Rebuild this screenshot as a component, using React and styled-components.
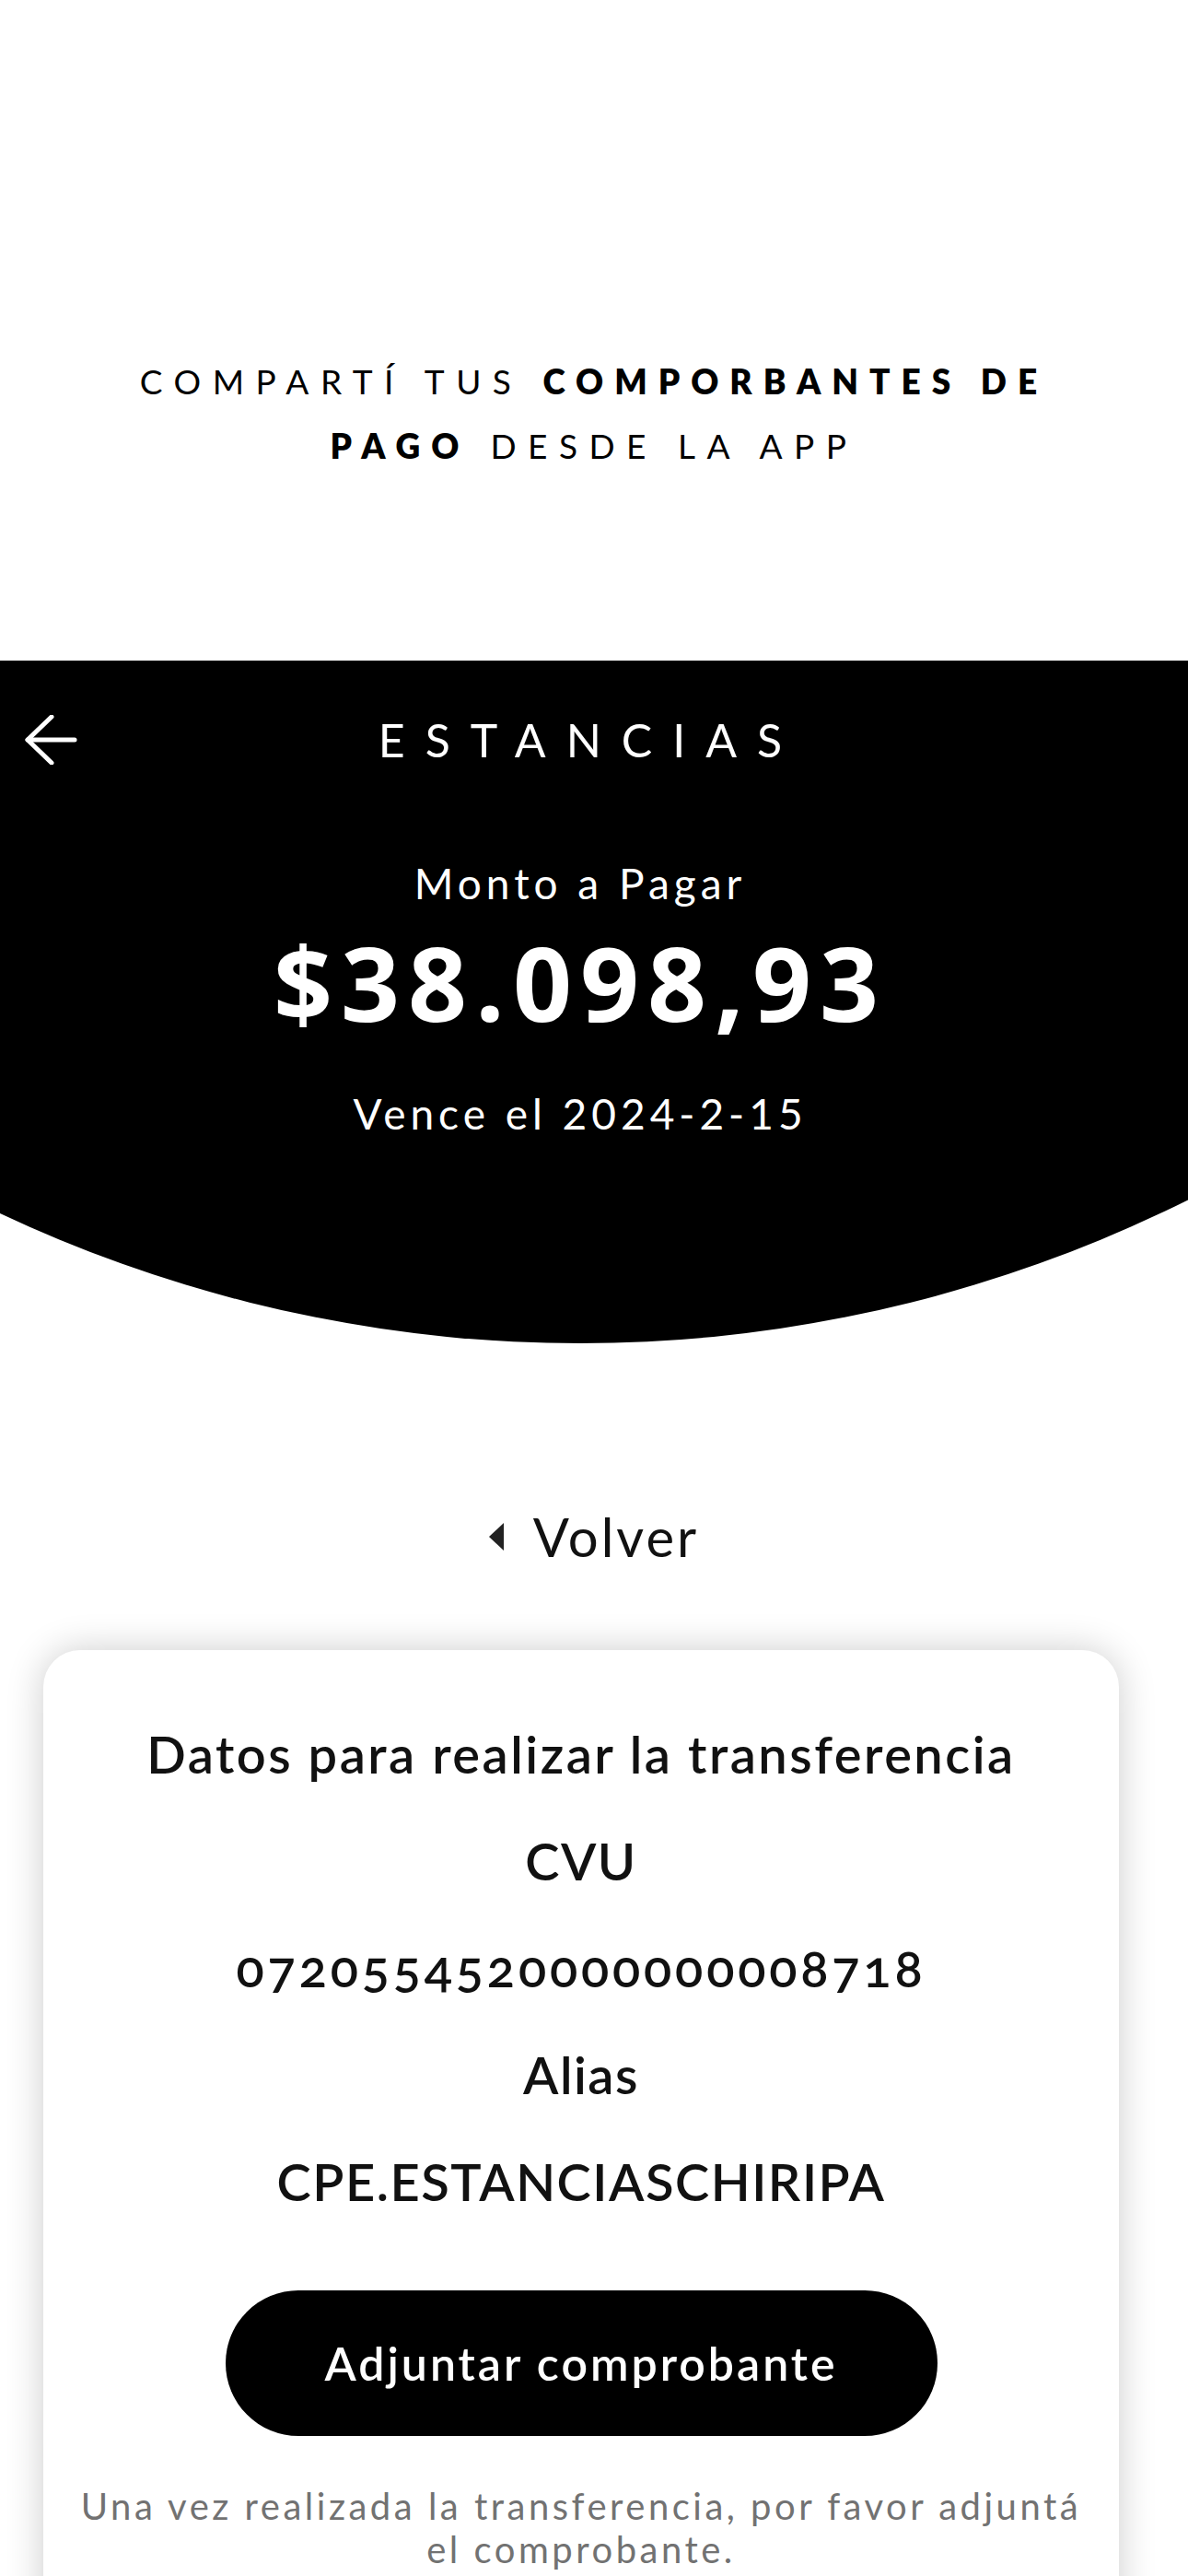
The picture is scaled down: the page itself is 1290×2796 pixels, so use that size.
import React from 'react';
import styled, { createGlobalStyle } from 'styled-components';

const GlobalStyle = createGlobalStyle`
  html, body {
    margin: 0;
    padding: 0;
    background: #ffffff;
  }
  html::-webkit-scrollbar { display: none; }
  html { scrollbar-width: none; }
  body {
    font-family: Lato, "Open Sans", sans-serif;
    color: #111;
    -webkit-font-smoothing: antialiased;
  }
`;

const Page = styled.div`
  height: 100vh;
  overflow: hidden;
  display: flex;
  flex-direction: column;

  & > * {
    flex-shrink: 0;
  }
`;

// Promo heading above the phone screen
const Promo = styled.section`
  height: 717px;
  box-sizing: border-box;
  padding-top: 379px;
  display: flex;
  justify-content: center;
`;

const PromoText = styled.p`
  margin: 0;
  text-align: center;
  font-family: Lato, sans-serif;
  font-weight: 400;
  font-size: 37px;
  line-height: 70px;
  letter-spacing: 12.5px;
  text-transform: uppercase;
  color: #000;
`;

const Strong = styled.span`
  font-weight: 800;
  letter-spacing: 12px;
`;

// Black header with curved bottom
const Header = styled.header`
  height: 741px;
  background: #000;
  color: #fff;
  clip-path: circle(1478px at 630px -737px);
  box-sizing: border-box;
  padding-right: 30px;
  display: flex;
  flex-direction: column;
  align-items: center;
`;

const TopBar = styled.div`
  width: 100%;
  height: 60px;
  margin-top: 56px;
  display: grid;
  grid-template-columns: 1fr auto 1fr;
  align-items: center;
`;

const BackButton = styled.button`
  justify-self: start;
  margin-left: 26px;
  padding: 0;
  border: none;
  background: none;
  display: flex;
  cursor: pointer;
`;

const Brand = styled.h1`
  margin: 0 -22px 0 0;
  font-family: Lato, sans-serif;
  font-weight: 400;
  font-size: 50px;
  line-height: 60px;
  letter-spacing: 22px;
`;

const Label = styled.div`
  margin-top: ${(p) => p.$top}px;
  font-family: Lato, sans-serif;
  font-size: ${(p) => p.$size}px;
  line-height: 1.2;
  letter-spacing: 5px;
  font-weight: 400;
`;

const Amount = styled.div`
  margin-top: 24px;
  font-family: "Open Sans", sans-serif;
  font-weight: 700;
  font-size: 112px;
  line-height: 112px;
  letter-spacing: 9px;
`;

// Volver link
const BackLink = styled.a`
  margin-top: 175px;
  align-self: center;
  display: flex;
  align-items: center;
  gap: 32px;
  font-family: Lato, sans-serif;
  font-size: 58px;
  line-height: 1.2;
  letter-spacing: 3px;
  color: #111;
  text-decoration: none;
`;

// Transfer card
const Card = styled.div`
  margin: 88px 0 0 47px;
  width: 1168px;
  box-sizing: border-box;
  padding: 55px 30px 80px;
  background: #fff;
  border-radius: 40px;
  box-shadow: 0 0 40px rgba(0, 0, 0, 0.2);
  display: flex;
  flex-direction: column;
  align-items: center;
`;

const Field = styled.div`
  font-family: Lato, sans-serif;
  font-weight: 600;
  font-size: 56px;
  line-height: 116px;
  letter-spacing: ${(p) => p.$spacing ?? 1.5}px;
  font-variant-numeric: oldstyle-nums;
  color: #111;
  text-align: center;
  white-space: nowrap;
`;

const AttachButton = styled.button`
  margin-top: 60px;
  width: 773px;
  height: 158px;
  border: none;
  border-radius: 79px;
  background: #000;
  color: #fff;
  font-family: Lato, sans-serif;
  font-weight: 600;
  font-size: 50px;
  letter-spacing: 3px;
  cursor: pointer;
`;

const Hint = styled.p`
  margin: 53px 0 0;
  font-family: Lato, sans-serif;
  font-size: 40px;
  line-height: 47px;
  letter-spacing: 3.5px;
  color: #727272;
  text-align: center;
  white-space: nowrap;
`;

const ArrowLeft = () => (
  <svg width="58" height="54" viewBox="0 0 58 54" fill="none" stroke="#fff" strokeWidth="5" strokeLinecap="round" strokeLinejoin="round">
    <path d="M55 27H4" />
    <path d="M30 2L4 27L30 52" />
  </svg>
);

const CaretLeft = () => (
  <svg width="16" height="30" viewBox="0 0 16 30">
    <path d="M16 0V30L0 15Z" fill="#222" />
  </svg>
);

const App = () => {
  return (
    <Page>
      <GlobalStyle />
      <Promo>
        <PromoText>
          Compartí tus <Strong>comporbantes de</Strong>
          <br />
          <Strong>pago</Strong> desde la app
        </PromoText>
      </Promo>

      <Header>
        <TopBar>
          <BackButton aria-label="Volver">
            <ArrowLeft />
          </BackButton>
          <Brand>ESTANCIAS</Brand>
          <span />
        </TopBar>
        <Label $top={98} $size={46}>Monto a Pagar</Label>
        <Amount>$38.098,93</Amount>
        <Label $top={59} $size={46}>Vence el 2024-2-15</Label>
      </Header>

      <BackLink href="#">
        <CaretLeft />
        Volver
      </BackLink>

      <Card>
        <Field $spacing={2.5}>Datos para realizar la transferencia</Field>
        <Field>CVU</Field>
        <Field $spacing={3.8}>0720554520000000008718</Field>
        <Field>Alias</Field>
        <Field>CPE.ESTANCIASCHIRIPA</Field>
        <AttachButton>Adjuntar comprobante</AttachButton>
        <Hint>
          Una vez realizada la transferencia, por favor adjuntá
          <br />
          el comprobante.
        </Hint>
      </Card>
    </Page>
  );
};

export default App;
